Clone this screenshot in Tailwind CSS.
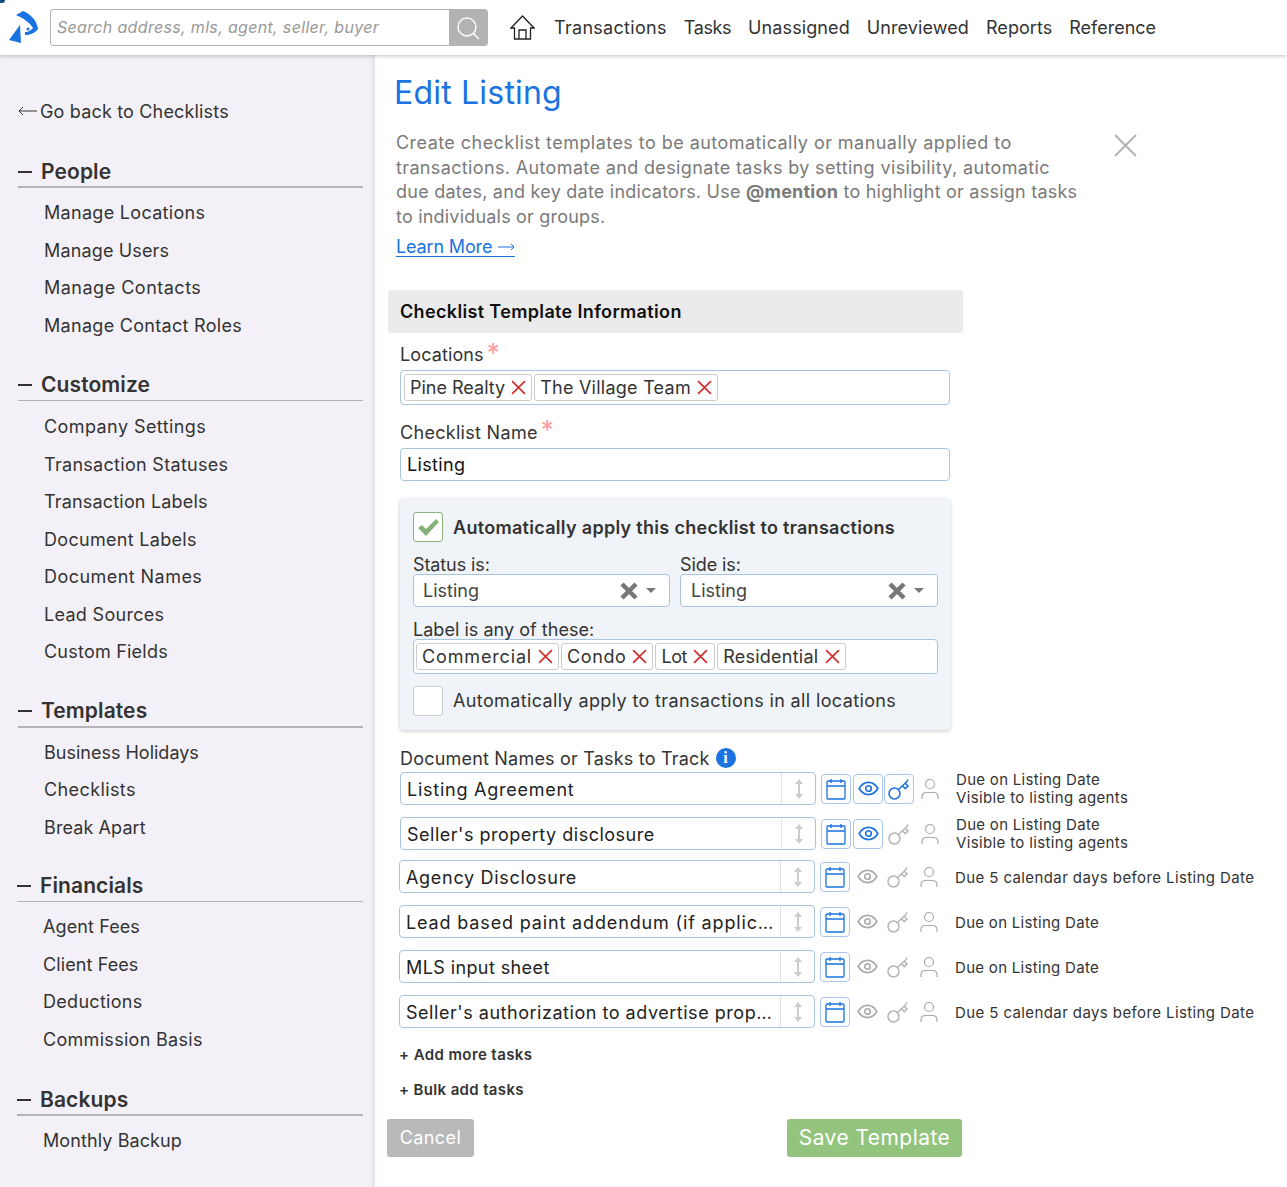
<!DOCTYPE html>
<html lang="en">
<head>
    <meta charset="UTF-8">
    <meta name="viewport" content="width=device-width, initial-scale=1.0">
    <title>Edit Listing</title>
    <script src="https://cdn.jsdelivr.net/npm/@tailwindcss/browser@4"></script>
</head>
<body class="bg-white font-['Inter',sans-serif] text-[#333] overflow-hidden">
    <svg class="hidden">
        <symbol id="x" viewBox="0 0 14 14"><path d="M1 1l12 12M13 1L1 13" fill="none" stroke="#d32f2f" stroke-width="1.6"/></symbol>
        <symbol id="cal" viewBox="0 0 20 22" fill="none" stroke="currentColor" stroke-width="1.3"><rect x="1" y="3" width="18" height="18" rx="1"/><path d="M1 8h18M5 1v4M15 1v4"/></symbol>
        <symbol id="eye" viewBox="0 0 22 16" fill="none" stroke="currentColor" stroke-width="1.7"><path d="M1 8c2.500-4.200 6-6.500 10-6.500S18.500 3.800 21 8c-2.500 4.200-6 6.500-10 6.500S3.500 12.200 1 8z"/><circle cx="11" cy="8" r="3"/></symbol>
        <symbol id="key" viewBox="0 0 22 22" fill="none" stroke="currentColor" stroke-width="1.5"><circle cx="6.500" cy="15.500" r="5.500"/><path d="M10.500 11.500L19 3.500M14.500 7.800l2.800 2.800 2.700-2.600-2.800-2.800M19 3.500l1-2"/></symbol>
        <symbol id="person" viewBox="0 0 18 22" fill="none" stroke="currentColor" stroke-width="1.2"><circle cx="9" cy="6" r="4.500"/><path d="M1 21v-2c0-3 2-4.500 4.500-4.500h7c2.500 0 4.500 1.500 4.500 4.500v2"/></symbol>
        <symbol id="sort" viewBox="0 0 10 20"><path d="M5 0l4 5H6v10h3l-4 5-4-5h3V5H1z" fill="currentColor"/></symbol>
    </svg>

    <!-- top nav -->
    <header class="relative z-10 h-[55px] bg-white shadow-[0_1px_4px_rgba(0,0,0,0.25)] flex items-center">
        <div class="absolute left-0 top-0 w-[5px] h-[3px] rounded-br-full bg-[#134a7c]"></div>
        <svg class="ml-[9px] w-[29px] h-[34px] mt-[1px]" viewBox="0 0 29 34">
            <path d="M7 4L14 0C22 3 28 10 29 18C26 22 21 24 16 24L16 21C20 21 22 19 24 17C20 11 14 7 7 4z" fill="#1a73e0"/>
            <circle cx="19" cy="18" r="1.500" fill="#1a73e0"/>
            <path d="M0 29L11 14L12 32z" fill="#1a73e0"/>
        </svg>
        <div class="ml-[12px] flex h-[37px] w-[438px] rounded-[3px] border border-[#b3b3b3] overflow-hidden">
            <div class="flex-1 pl-[6px] pb-px flex items-center italic text-[#999] text-[16px] tracking-[0.33px]">Search address, mls, agent, seller, buyer</div>
            <div class="w-[38px] bg-[#b3b3b3] flex items-center justify-center">
                <svg class="w-[24px] h-[24px]" viewBox="0 0 24 24" fill="none" stroke="#fff" stroke-width="1.4"><circle cx="11" cy="11" r="9"/><path d="M17.500 17.500L23 23"/></svg>
            </div>
        </div>
        <svg class="ml-[22px] w-[25px] h-[25px]" viewBox="0 0 25 25" fill="none" stroke="#222" stroke-width="1.3"><path d="M1 13L12.500 1 24 13h-3.500v11h-16V13zM9 24v-9h7v9"/></svg>
        <nav class="ml-[19px] flex gap-[17px] text-[18px] text-[#333]">
            <a class="tracking-[0.3px]">Transactions</a><a class="tracking-[-0.4px]">Tasks</a><a class="tracking-[0.1px]">Unassigned</a><a class="tracking-[0.1px]">Unreviewed</a><a class="tracking-[0.05px]">Reports</a><a class="tracking-[0px]">Reference</a>
        </nav>
    </header>

    <div class="flex h-[1132px]">
        <!-- sidebar -->
        <aside class="w-[375px] shrink-0 bg-[#f3f1f7] border-r border-[#e4e2e8] shadow-[inset_-5px_0_5px_-4px_rgba(0,0,0,0.08)] pl-[18px] pr-[11px] pt-[43px] text-[18px] tracking-[0.3px] text-[#333]">
            <a class="flex items-center h-[26px] tracking-[0.17px]">
                <svg class="w-[19px] h-[10px] mr-[3px]" viewBox="0 0 19 10" fill="none" stroke="#333" stroke-width="1"><path d="M19 5H1M5 1L1 5l4 4"/></svg>Go back to Checklists
            </a>
            <div class="mt-[33px]">
                <h2 class="flex items-center h-[31px] font-semibold text-[21px] tracking-[0.1px] border-b-2 border-[#b5b3b8]"><span class="w-[14px] h-[2px] bg-[#333] mr-[9px]"></span>People</h2>
                <ul class="pl-[26px] pt-[6px]">
                    <li class="h-[37.5px] flex items-center">Manage Locations</li>
                    <li class="h-[37.5px] flex items-center tracking-[0.15px]">Manage Users</li>
                    <li class="h-[37.5px] flex items-center tracking-[0.5px]">Manage Contacts</li>
                    <li class="h-[37.5px] flex items-center">Manage Contact Roles</li>
                </ul>
            </div>
            <div class="mt-[26px]">
                <h2 class="flex items-center h-[31px] font-semibold text-[21px] tracking-[0.1px] border-b border-[#b5b3b8]"><span class="w-[14px] h-[2px] bg-[#333] mr-[9px]"></span>Customize</h2>
                <ul class="pl-[26px] pt-[7px]">
                    <li class="h-[37.5px] flex items-center tracking-[0.42px]">Company Settings</li>
                    <li class="h-[37.5px] flex items-center">Transaction Statuses</li>
                    <li class="h-[37.5px] flex items-center tracking-[0.18px]">Transaction Labels</li>
                    <li class="h-[37.5px] flex items-center">Document Labels</li>
                    <li class="h-[37.5px] flex items-center tracking-[0.45px]">Document Names</li>
                    <li class="h-[37.5px] flex items-center">Lead Sources</li>
                    <li class="h-[37.5px] flex items-center tracking-[0.22px]">Custom Fields</li>
                </ul>
            </div>
            <div class="mt-[26px]">
                <h2 class="flex items-center h-[31px] font-semibold text-[21px] tracking-[0.1px] border-b-2 border-[#b5b3b8]"><span class="w-[14px] h-[2px] bg-[#333] mr-[9px]"></span>Templates</h2>
                <ul class="pl-[26px] pt-[6px]">
                    <li class="h-[37.5px] flex items-center tracking-[0px]">Business Holidays</li>
                    <li class="h-[37.5px] flex items-center tracking-[0.4px]">Checklists</li>
                    <li class="h-[37.5px] flex items-center tracking-[0.1px]">Break Apart</li>
                </ul>
            </div>
            <div class="mt-[25px] -ml-px">
                <h2 class="flex items-center h-[31px] font-semibold text-[21px] tracking-[0.1px] border-b border-[#b5b3b8]"><span class="w-[14px] h-[2px] bg-[#333] mr-[9px]"></span>Financials</h2>
                <ul class="pl-[26px] pt-[6px]">
                    <li class="h-[37.5px] flex items-center tracking-[0.1px]">Agent Fees</li>
                    <li class="h-[37.5px] flex items-center tracking-[0.1px]">Client Fees</li>
                    <li class="h-[37.5px] flex items-center">Deductions</li>
                    <li class="h-[37.5px] flex items-center">Commission Basis</li>
                </ul>
            </div>
            <div class="mt-[27px] -ml-px">
                <h2 class="flex items-center h-[31px] font-semibold text-[21px] tracking-[0.1px] border-b-2 border-[#b5b3b8]"><span class="w-[14px] h-[2px] bg-[#333] mr-[9px]"></span>Backups</h2>
                <ul class="pl-[26px] pt-[6px]">
                    <li class="h-[37.5px] flex items-center tracking-[0.1px]">Monthly Backup</li>
                </ul>
            </div>
        </aside>

        <!-- main -->
        <main class="flex-1 pl-[13px] text-[#333] relative">
            <h1 class="mt-[17px] ml-[6px] text-[32px] leading-[42px] text-[#1a73e0] tracking-[0.2px]">Edit Listing</h1>
            <p class="mt-[17px] ml-[8px] text-[18px] leading-[24.6px] text-[#7a7a7a] whitespace-nowrap"><span class="tracking-[0.45px]">Create checklist templates to be automatically or manually applied to</span><br><span class="tracking-[0.36px]">transactions. Automate and designate tasks by setting visibility, automatic</span><br><span class="tracking-[0.23px]">due dates, and key date indicators. Use <b class="font-bold">@mention</b> to highlight or assign tasks</span><br><span class="tracking-[0.2px]">to individuals or groups.</span></p>
            <svg class="absolute left-[739px] top-[79px] w-[23px] h-[23px]" viewBox="0 0 23 23" fill="none" stroke="#b0b0b0" stroke-width="1.800"><path d="M1 1l21 21M22 1L1 22"/></svg>
            <a class="flex w-fit items-center ml-[8px] mt-[9px] text-[18px] leading-[18px] text-[#1a73e0] border-b border-[#1a73e0] tracking-[-0.15px]">Learn More<svg class="ml-[6px] w-[17px] h-[8px]" viewBox="0 0 17 8" fill="none" stroke="#1a73e0" stroke-width="1"><path d="M0 4h16M13 1l3 3-3 3"/></svg></a>

            <section class="mt-[33px] w-[575px]">
                <h2 class="h-[43px] bg-[#ebebeb] rounded-[3px] pl-[12px] flex items-center font-semibold text-[18px] text-[#111] tracking-[0.35px]">Checklist Template Information</h2>
                <div class="pl-[12px] pr-[13px]">
                    <label class="block mt-[9px] h-[28px] text-[18px] leading-[26px] tracking-[0.1px]">Locations<span class="text-[#ff9aa2] text-[26px] align-top leading-[22px] ml-[3px]">*</span></label>
                    <div class="h-[35px] rounded-[4px] border border-[#a9c4de] flex items-center gap-[2px] pl-[3px] text-[18px]">
                        <span class="h-[27px] rounded-[3px] border border-[#ccc] flex items-center pl-[5px] pr-[5px] tracking-[0px]">Pine Realty<svg class="w-[15px] h-[15px] ml-[6px]"><use href="#x"/></svg></span>
                        <span class="h-[27px] rounded-[3px] border border-[#ccc] flex items-center pl-[5px] pr-[5px] tracking-[0.25px]">The Village Team<svg class="w-[15px] h-[15px] ml-[6px]"><use href="#x"/></svg></span>
                    </div>
                    <label class="block mt-[14px] h-[29px] text-[18px] leading-[27px] tracking-[0.3px]">Checklist Name<span class="text-[#ff9aa2] text-[26px] align-top leading-[22px] ml-[3px]">*</span></label>
                    <div class="h-[33px] rounded-[4px] border border-[#a9c4de] flex items-center pl-[6px] text-[18px] text-[#111] tracking-[0.35px]">Listing</div>

                    <div class="mt-[18px] h-[231px] w-[550px] rounded-[4px] bg-[#f0f3f7] shadow-[0_1px_4px_rgba(0,0,0,0.22)] pl-[13px] pr-[12px] pt-[13px]">
                        <div class="flex items-center h-[30px]">
                            <span class="w-[30px] h-[30px] bg-white rounded-[3px] border border-[#8cb37e] flex items-center justify-center">
                                <svg class="w-[24px] h-[20px]" viewBox="0 0 24 20"><path d="M2 11l4-3 4 4L20 2l3 3L10 19z" fill="#86b179"/></svg>
                            </span>
                            <span class="ml-[10px] font-semibold text-[18px] tracking-[0.3px]">Automatically apply this checklist to transactions</span>
                        </div>
                        <div class="mt-[11px] flex gap-[10px] text-[18px]">
                            <div class="w-[257px]">
                                <div class="h-[21px] leading-[24px] tracking-[-0.1px]">Status is:</div>
                                <div class="h-[33px] bg-white rounded-[4px] border border-[#a9c4de] flex items-center pl-[9px] pr-[13px]">
                                    <span class="flex-1 text-[#444] tracking-[0px]">Listing</span>
                                    <svg class="w-[18px] h-[18px]" viewBox="0 0 18 18"><path d="M2 2l14 14M16 2L2 16" stroke="#777" stroke-width="4.500"/></svg>
                                    <span class="ml-[8px] w-0 h-0 border-x-[5px] border-x-transparent border-t-[5px] border-t-[#777]"></span>
                                </div>
                            </div>
                            <div class="w-[258px]">
                                <div class="h-[21px] leading-[24px] tracking-[-0.1px]">Side is:</div>
                                <div class="h-[33px] bg-white rounded-[4px] border border-[#a9c4de] flex items-center pl-[10px] pr-[13px]">
                                    <span class="flex-1 text-[#444] tracking-[0px]">Listing</span>
                                    <svg class="w-[18px] h-[18px]" viewBox="0 0 18 18"><path d="M2 2l14 14M16 2L2 16" stroke="#777" stroke-width="4.500"/></svg>
                                    <span class="ml-[8px] w-0 h-0 border-x-[5px] border-x-transparent border-t-[5px] border-t-[#777]"></span>
                                </div>
                            </div>
                        </div>
                        <div class="mt-[10px] h-[22px] leading-[25px] text-[18px] tracking-[0.03px]">Label is any of these:</div>
                        <div class="h-[35px] w-[525px] bg-white rounded-[4px] border border-[#a9c4de] flex items-center gap-[2px] pl-[2px] text-[18px]">
                            <span class="h-[27px] rounded-[3px] border border-[#ccc] flex items-center pl-[5px] pr-[5px] tracking-[0.85px]">Commercial<svg class="w-[15px] h-[15px] ml-[6px]"><use href="#x"/></svg></span>
                            <span class="h-[27px] rounded-[3px] border border-[#ccc] flex items-center pl-[5px] pr-[5px] tracking-[0.6px]">Condo<svg class="w-[15px] h-[15px] ml-[6px]"><use href="#x"/></svg></span>
                            <span class="h-[27px] rounded-[3px] border border-[#ccc] flex items-center pl-[5px] pr-[6px] tracking-[-0.4px]">Lot<svg class="w-[15px] h-[15px] ml-[6px]"><use href="#x"/></svg></span>
                            <span class="h-[27px] rounded-[3px] border border-[#ccc] flex items-center pl-[5px] pr-[5px] tracking-[0.25px]">Residential<svg class="w-[15px] h-[15px] ml-[7px]"><use href="#x"/></svg></span>
                        </div>
                        <div class="mt-[12px] pb-px flex items-center h-[30px]">
                            <span class="w-[30px] h-[30px] bg-white rounded-[3px] border border-[#ccc]"></span>
                            <span class="ml-[10px] text-[18px] tracking-[0.37px]">Automatically apply to transactions in all locations</span>
                        </div>
                    </div>
                </div>
            </section>

            <div class="ml-[12px] mt-[14px] h-[28px] flex items-center text-[18px] tracking-[0.2px]">Document Names or Tasks to Track
                <span class="ml-[6px] w-[20px] h-[20px] rounded-full bg-[#1a73e0] text-white flex items-center justify-center text-[16px] font-bold font-['Liberation_Serif',serif]">i</span>
            </div>

            <!-- task rows -->
            <div class="ml-[12px] flex items-center h-[33px] text-[18px]">
                <div class="w-[416px] h-[33px] rounded-[4px] border border-[#a9c4de] flex items-center pl-[6px] tracking-[0.75px] text-[#222]"><span class="flex-1 pt-px">Listing Agreement</span><span class="w-[34px] h-full border-l border-[#e2e2e2] flex items-center justify-center text-[#ccc]"><svg class="w-[10px] h-[20px]"><use href="#sort"/></svg></span></div>
                <span class="ml-[5px] w-[30px] h-[30px] rounded-[4px] border border-[#a9c4ee] flex items-center justify-center text-[#1a73e0]"><svg class="w-[20px] h-[22px]"><use href="#cal"/></svg></span>
                <span class="ml-[2px] w-[30px] h-[30px] rounded-[4px] border border-[#a9c4ee] flex items-center justify-center text-[#1a73e0]"><svg class="w-[21px] h-[15px]"><use href="#eye"/></svg></span>
                <span class="ml-px w-[30px] h-[30px] rounded-[4px] border border-[#a9c4ee] flex items-center justify-center text-[#1a73e0]"><svg class="w-[22px] h-[22px]"><use href="#key"/></svg></span>
                <svg class="ml-[7px] w-[18px] h-[22px] text-[#aaa]"><use href="#person"/></svg>
                <span class="ml-[17px] pt-px text-[15px] leading-[18px] tracking-[0.3px]">Due on Listing Date<br><span class="tracking-[0.36px]">Visible to listing agents</span></span>
            </div>
            <div class="ml-[12px] mt-[12px] flex items-center h-[33px] text-[18px]">
                <div class="w-[416px] h-[33px] rounded-[4px] border border-[#a9c4de] flex items-center pl-[6px] tracking-[0.5px] text-[#222]"><span class="flex-1 pt-px">Seller's property disclosure</span><span class="w-[34px] h-full border-l border-[#e2e2e2] flex items-center justify-center text-[#ccc]"><svg class="w-[10px] h-[20px]"><use href="#sort"/></svg></span></div>
                <span class="ml-[5px] w-[30px] h-[30px] rounded-[4px] border border-[#a9c4ee] flex items-center justify-center text-[#1a73e0]"><svg class="w-[20px] h-[22px]"><use href="#cal"/></svg></span>
                <span class="ml-[2px] w-[30px] h-[30px] rounded-[4px] border border-[#a9c4ee] flex items-center justify-center text-[#1a73e0]"><svg class="w-[21px] h-[15px]"><use href="#eye"/></svg></span>
                <span class="ml-px w-[30px] h-[30px] flex items-center justify-center text-[#b5b5b5]"><svg class="w-[22px] h-[22px]"><use href="#key"/></svg></span>
                <svg class="ml-[7px] w-[18px] h-[22px] text-[#aaa]"><use href="#person"/></svg>
                <span class="ml-[17px] pt-px text-[15px] leading-[18px] tracking-[0.3px]">Due on Listing Date<br><span class="tracking-[0.36px]">Visible to listing agents</span></span>
            </div>
            <div class="ml-[11px] mt-[10px] flex items-center h-[33px] text-[18px]">
                <div class="w-[416px] h-[33px] rounded-[4px] border border-[#a9c4de] flex items-center pl-[6px] tracking-[0.7px] text-[#222]"><span class="flex-1 pt-px">Agency Disclosure</span><span class="w-[34px] h-full border-l border-[#e2e2e2] flex items-center justify-center text-[#ccc]"><svg class="w-[10px] h-[20px]"><use href="#sort"/></svg></span></div>
                <span class="ml-[5px] w-[30px] h-[30px] rounded-[4px] border border-[#a9c4ee] flex items-center justify-center text-[#1a73e0]"><svg class="w-[20px] h-[22px]"><use href="#cal"/></svg></span>
                <span class="ml-[2px] w-[30px] h-[30px] flex items-center justify-center text-[#aaa]"><svg class="w-[21px] h-[15px]"><use href="#eye"/></svg></span>
                <span class="ml-px w-[30px] h-[30px] flex items-center justify-center text-[#b5b5b5]"><svg class="w-[22px] h-[22px]"><use href="#key"/></svg></span>
                <svg class="ml-[7px] w-[18px] h-[22px] text-[#aaa]"><use href="#person"/></svg>
                <span class="ml-[17px] pt-[2px] text-[15px] leading-[18px] tracking-[0.4px]">Due 5 calendar days before Listing Date</span>
            </div>
            <div class="ml-[11px] mt-[12px] flex items-center h-[33px] text-[18px]">
                <div class="w-[416px] h-[33px] rounded-[4px] border border-[#a9c4de] flex items-center pl-[6px] tracking-[0.85px] text-[#222]"><span class="flex-1 pt-px whitespace-nowrap">Lead based paint addendum (if applic…</span><span class="w-[34px] h-full border-l border-[#e2e2e2] flex items-center justify-center text-[#ccc] shrink-0"><svg class="w-[10px] h-[20px]"><use href="#sort"/></svg></span></div>
                <span class="ml-[5px] w-[30px] h-[30px] rounded-[4px] border border-[#a9c4ee] flex items-center justify-center text-[#1a73e0]"><svg class="w-[20px] h-[22px]"><use href="#cal"/></svg></span>
                <span class="ml-[2px] w-[30px] h-[30px] flex items-center justify-center text-[#aaa]"><svg class="w-[21px] h-[15px]"><use href="#eye"/></svg></span>
                <span class="ml-px w-[30px] h-[30px] flex items-center justify-center text-[#b5b5b5]"><svg class="w-[22px] h-[22px]"><use href="#key"/></svg></span>
                <svg class="ml-[7px] w-[18px] h-[22px] text-[#aaa]"><use href="#person"/></svg>
                <span class="ml-[17px] pt-[2px] text-[15px] leading-[18px] tracking-[0.3px]">Due on Listing Date</span>
            </div>
            <div class="ml-[11px] mt-[12px] flex items-center h-[33px] text-[18px]">
                <div class="w-[416px] h-[33px] rounded-[4px] border border-[#a9c4de] flex items-center pl-[6px] tracking-[0.4px] text-[#222]"><span class="flex-1 pt-px">MLS input sheet</span><span class="w-[34px] h-full border-l border-[#e2e2e2] flex items-center justify-center text-[#ccc]"><svg class="w-[10px] h-[20px]"><use href="#sort"/></svg></span></div>
                <span class="ml-[5px] w-[30px] h-[30px] rounded-[4px] border border-[#a9c4ee] flex items-center justify-center text-[#1a73e0]"><svg class="w-[20px] h-[22px]"><use href="#cal"/></svg></span>
                <span class="ml-[2px] w-[30px] h-[30px] flex items-center justify-center text-[#aaa]"><svg class="w-[21px] h-[15px]"><use href="#eye"/></svg></span>
                <span class="ml-px w-[30px] h-[30px] flex items-center justify-center text-[#b5b5b5]"><svg class="w-[22px] h-[22px]"><use href="#key"/></svg></span>
                <svg class="ml-[7px] w-[18px] h-[22px] text-[#aaa]"><use href="#person"/></svg>
                <span class="ml-[17px] pt-[2px] text-[15px] leading-[18px] tracking-[0.3px]">Due on Listing Date</span>
            </div>
            <div class="ml-[11px] mt-[12px] flex items-center h-[33px] text-[18px]">
                <div class="w-[416px] h-[33px] rounded-[4px] border border-[#a9c4de] flex items-center pl-[6px] tracking-[0.53px] text-[#222]"><span class="flex-1 pt-px whitespace-nowrap">Seller's authorization to advertise prop…</span><span class="w-[34px] h-full border-l border-[#e2e2e2] flex items-center justify-center text-[#ccc] shrink-0"><svg class="w-[10px] h-[20px]"><use href="#sort"/></svg></span></div>
                <span class="ml-[5px] w-[30px] h-[30px] rounded-[4px] border border-[#a9c4ee] flex items-center justify-center text-[#1a73e0]"><svg class="w-[20px] h-[22px]"><use href="#cal"/></svg></span>
                <span class="ml-[2px] w-[30px] h-[30px] flex items-center justify-center text-[#aaa]"><svg class="w-[21px] h-[15px]"><use href="#eye"/></svg></span>
                <span class="ml-px w-[30px] h-[30px] flex items-center justify-center text-[#b5b5b5]"><svg class="w-[22px] h-[22px]"><use href="#key"/></svg></span>
                <svg class="ml-[7px] w-[18px] h-[22px] text-[#aaa]"><use href="#person"/></svg>
                <span class="ml-[17px] pt-[2px] text-[15px] leading-[18px] tracking-[0.4px]">Due 5 calendar days before Listing Date</span>
            </div>

            <div class="ml-[11px] mt-[17px] h-[20px] leading-[20px] text-[15px] font-semibold tracking-[0.4px]">+ Add more tasks</div>
            <div class="ml-[11px] mt-[15px] h-[20px] leading-[20px] text-[15px] font-semibold tracking-[0.35px]">+ Bulk add tasks</div>
            <div class="mt-[19px] flex justify-between w-[575px] -ml-px">
                <button class="w-[87px] h-[38px] pb-[2px] rounded-[3px] bg-[#b9b9b9] text-white text-[18px] tracking-[0.4px]">Cancel</button>
                <button class="w-[175px] h-[38px] pb-px rounded-[3px] bg-[#93c47d] text-white text-[21px] tracking-[0.45px]">Save Template</button>
            </div>
        </main>
    </div>
</body>
</html>
